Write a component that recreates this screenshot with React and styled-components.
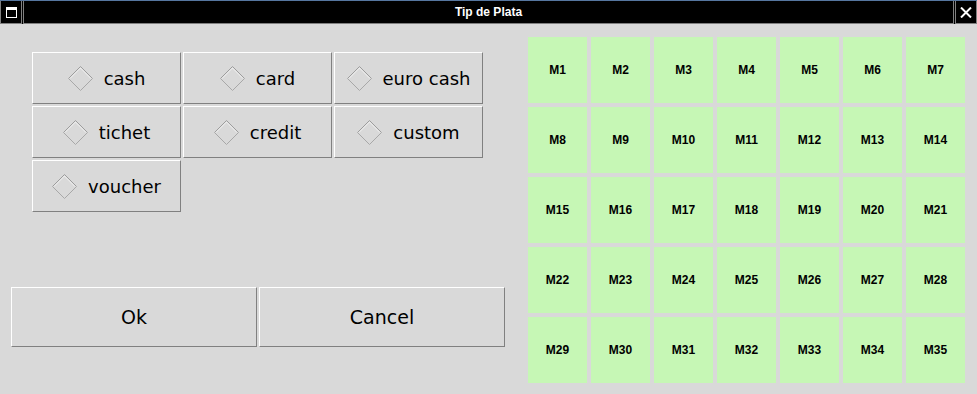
import React from "react";
import styled, { createGlobalStyle } from "styled-components";

const Global = createGlobalStyle`
  html, body { margin: 0; padding: 0; background: #d9d9d9; }
  * { box-sizing: border-box; }
`;

const Window = styled.div`
  width: 977px;
  height: 394px;
  background: #d9d9d9;
  overflow: hidden;
  display: flex;
  flex-direction: column;
`;

const TitleBar = styled.div`
  height: 24px;
  display: flex;
  gap: 1px;
  background: #000;
  border-top: 1px solid #56769f;
`;

const FrameBox = styled.div`
  width: ${(p) => (p.$grow ? "auto" : "22px")};
  flex: ${(p) => (p.$grow ? "1" : "none")};
  height: 23px;
  background: #000;
  border: 1px solid #808080;
  border-top: none;
  display: flex;
  align-items: center;
  justify-content: center;
`;

const TitleText = styled.span`
  font-family: "Liberation Sans", Arial, sans-serif;
  font-weight: bold;
  font-size: 12px;
  color: #fff;
`;

const WinIcon = styled.span`
  width: 11px;
  height: 11px;
  border: 1px solid #fff;
  border-top-width: 3px;
`;

const Content = styled.div`
  display: flex;
  padding-top: 13px;
`;

const LeftPanel = styled.div`
  width: 505px;
  height: 310px;
  padding-left: 11px;
  display: flex;
  flex-direction: column;
`;

const Options = styled.div`
  margin: 15px 0 0 21px;
  display: grid;
  grid-template-columns: repeat(3, 149px);
  grid-auto-rows: 52px;
  gap: 2px;
`;

const RaisedButton = styled.button`
  margin: 0;
  padding: 0;
  background: #d9d9d9;
  border-top: 1px solid #ffffff;
  border-left: 1px solid #ffffff;
  border-right: 1px solid #808080;
  border-bottom: 1px solid #808080;
  display: flex;
  align-items: center;
  justify-content: center;
  gap: ${(p) => (p.$gap ? p.$gap : "0")};
  font-family: "DejaVu Sans", sans-serif;
  font-size: ${(p) => p.$size || "18px"};
  color: #000;
  cursor: pointer;
`;

const Actions = styled.div`
  margin-top: auto;
  display: grid;
  grid-template-columns: 246px 246px;
  grid-auto-rows: 60px;
  gap: 2px;
`;

const Grid = styled.div`
  margin-left: 23px;
  display: grid;
  grid-template-columns: repeat(7, 59px);
  grid-auto-rows: 66px;
  gap: 4px;
`;

const Cell = styled.div`
  background: #c6f7b5;
  display: flex;
  align-items: center;
  justify-content: center;
  font-family: "Liberation Sans", Arial, sans-serif;
  font-weight: bold;
  font-size: 12px;
  color: #000;
`;

const Diamond = () => (
  <svg width="25" height="25" viewBox="0 0 25 25">
    <polyline points="0.5,12.5 12.5,0.5 24.5,12.5" fill="none" stroke="#9c9c9c" strokeWidth="1" />
    <polyline points="24.5,12.5 12.5,24.5 0.5,12.5" fill="none" stroke="#a8a8a8" strokeWidth="1" />
    <polyline points="2,12.5 12.5,2 23,12.5" fill="none" stroke="#ffffff" strokeWidth="1" opacity="0.6" />
  </svg>
);

const CloseX = () => (
  <svg width="12" height="11" viewBox="0 0 12 11">
    <path d="M1 0.5 L11 10.5 M11 0.5 L1 10.5" stroke="#fff" strokeWidth="2" fill="none" />
  </svg>
);

const options = ["cash", "card", "euro cash", "tichet", "credit", "custom", "voucher"];

export default function App() {
  const cells = Array.from({ length: 35 }, (_, i) => `M${i + 1}`);
  return (
    <>
      <Global />
      <Window>
        <TitleBar>
          <FrameBox>
            <WinIcon />
          </FrameBox>
          <FrameBox $grow>
            <TitleText>Tip de Plata</TitleText>
          </FrameBox>
          <FrameBox>
            <CloseX />
          </FrameBox>
        </TitleBar>
        <Content>
          <LeftPanel>
            <Options>
              {options.map((o) => (
                <RaisedButton key={o} $gap="11px">
                  <Diamond />
                  <span>{o}</span>
                </RaisedButton>
              ))}
            </Options>
            <Actions>
              <RaisedButton $size="19px">Ok</RaisedButton>
              <RaisedButton $size="19px">Cancel</RaisedButton>
            </Actions>
          </LeftPanel>
          <Grid>
            {cells.map((c) => (
              <Cell key={c}>{c}</Cell>
            ))}
          </Grid>
        </Content>
      </Window>
    </>
  );
}
